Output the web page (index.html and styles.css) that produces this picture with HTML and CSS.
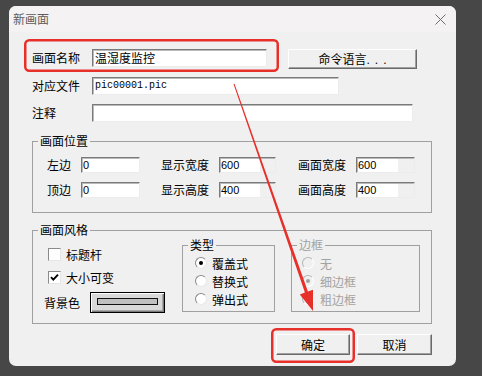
FILE: index.html
```html
<!DOCTYPE html>
<html lang="zh-CN">
<head>
<meta charset="utf-8">
<title>新画面</title>
<link rel="stylesheet" href="styles.css">
</head>
<body>
<div class="dialog">
  <div class="titlebar">
    <span class="title">新画面</span>
    <svg class="close" width="11" height="11" viewBox="0 0 11 11"><path d="M0.5 0.5L10.5 10.5M10.5 0.5L0.5 10.5" stroke="#6e6e6e" stroke-width="1" fill="none"/></svg>
  </div>
  <div class="content">
    <div class="row row-name">
      <span class="label">画面名称</span>
      <div class="input w-name">温湿度监控</div>
      <button class="btn btn-cmd">命令语言<span class="dots">...</span></button>
    </div>
    <div class="row row-file">
      <span class="label">对应文件</span>
      <div class="input w-file mono">pic00001.pic</div>
    </div>
    <div class="row row-note">
      <span class="label">注释</span>
      <div class="input w-note"></div>
    </div>

    <fieldset class="group g-pos">
      <legend>画面位置</legend>
      <div class="pos-grid">
        <span class="plabel">左边</span><div class="input num">0</div>
        <span></span>
        <span class="plabel">显示宽度</span><div class="input num partial">600</div>
        <span></span>
        <span class="plabel">画面宽度</span><div class="input num partial">600</div>
        <span class="plabel">顶边</span><div class="input num">0</div>
        <span></span>
        <span class="plabel">显示高度</span><div class="input num partial">400</div>
        <span></span>
        <span class="plabel">画面高度</span><div class="input num partial">400</div>
      </div>
    </fieldset>

    <fieldset class="group g-style">
      <legend>画面风格</legend>
      <div class="style-body">
        <div class="style-left">
          <div class="check-row"><span class="checkbox"></span><span>标题杆</span></div>
          <div class="check-row gap2"><span class="checkbox"><svg width="11" height="11" viewBox="0 0 11 11"><path d="M2 5.2L4.3 7.6L9 2.6" stroke="#000" stroke-width="1.9" fill="none"/></svg></span><span>大小可变</span></div>
          <div class="bg-row"><span class="bg-label">背景色</span><span class="swatch"><span class="swatch-inner"></span></span></div>
        </div>
        <fieldset class="group sub g-type">
          <legend>类型</legend>
          <div class="radios">
            <div class="radio-row"><span class="radio on"></span><span>覆盖式</span></div>
            <div class="radio-row"><span class="radio"></span><span>替换式</span></div>
            <div class="radio-row"><span class="radio"></span><span>弹出式</span></div>
          </div>
        </fieldset>
        <fieldset class="group sub g-border disabled">
          <legend>边框</legend>
          <div class="radios">
            <div class="radio-row"><span class="radio"></span><span>无</span></div>
            <div class="radio-row"><span class="radio on"></span><span>细边框</span></div>
            <div class="radio-row"><span class="radio"></span><span>粗边框</span></div>
          </div>
        </fieldset>
      </div>
    </fieldset>

    <div class="actions">
      <button class="btn btn-ok">确定</button>
      <button class="btn btn-cancel">取消</button>
    </div>
  </div>
</div>

<svg class="annot" width="482" height="376" viewBox="0 0 482 376">
  <rect x="25.25" y="40.25" width="252.5" height="30.5" rx="4" fill="none" stroke="#e8302b" stroke-width="2.5"/>
  <rect x="272.25" y="329.25" width="81.5" height="32.5" rx="4" fill="none" stroke="#e8302b" stroke-width="2.5"/>
  <polygon points="233.5,84 234.5,83.7 307.9,291.6 313,289.8 313,311 299.8,294.4 304.9,292.6" fill="#e8302b"/>
</svg>
</body>
</html>
```
FILE: styles.css
```css
* { box-sizing: border-box; }
html, body { margin: 0; padding: 0; }
body {
  position: relative;
  width: 482px;
  height: 376px;
  overflow: hidden;
  background: #474747;
  font-family: "Noto Sans CJK SC", "Microsoft YaHei", sans-serif;
  font-size: 12px;
  color: #000;
}
.dialog {
  margin: 6px 0 0 9px;
  width: 447px;
  height: 360px;
  background: #f0f0f0;
  border-radius: 7px;
  overflow: hidden;
}
.titlebar {
  height: 26px;
  background: #f4f2f2;
  display: flex;
  align-items: center;
  justify-content: space-between;
  padding: 0 10px 0 4px;
}
.title { color: #5c5c5c; line-height: 14px; }
.close { display: block; }

.content { padding: 17px 24px 0 23px; }
.row { display: flex; align-items: flex-start; height: 18px; }
.row-name { height: 20px; }
.row-file { margin-top: 8px; }
.row-note { margin-top: 9px; }
.label { width: 60px; line-height: 18px; flex: none; }

.input {
  height: 18px;
  background: #fff;
  border: 1px solid;
  border-color: #7a7a7a #ececec #ececec #7a7a7a;
  box-shadow: inset 1px 1px 0 #b9b9b9;
  padding-left: 2px;
  line-height: 16px;
  white-space: nowrap;
  overflow: hidden;
  flex: none;
}
.w-name { width: 175px; }
.w-file { width: 247px; }
.w-note { width: 321px; }
.mono { font-family: "Liberation Mono", monospace; font-size: 10px; }

.btn {
  font-family: inherit;
  font-size: 12px;
  color: #000;
  background: #f0f0f0;
  border: 1px solid;
  border-color: #fff #6a6a6a #6a6a6a #fff;
  box-shadow: inset -1px -1px 0 #a0a0a0;
  padding: 0;
  line-height: 16px;
  flex: none;
}
.btn-cmd { width: 129px; height: 20px; margin-left: 21px; }
.dots { font-family: "Liberation Sans", sans-serif; letter-spacing: 5px; margin-right: -5px; }

.group {
  margin: 0;
  padding: 0;
  border: 1px solid #a0a0a0;
  min-width: 0;
}
.group > legend {
  margin-left: 5px;
  padding: 0 2px;
  line-height: 14px;
  font-size: 12px;
}
.g-pos { margin-top: 12px; }
.pos-grid {
  display: grid;
  grid-template-columns: 34px 59px 21px 58px 57px 22px 58px 59px;
  grid-auto-rows: 16px;
  row-gap: 9px;
  padding: 9px 0 14px 14px;
}
.plabel { line-height: 16px; }
.input.num {
  height: 16px;
  font-family: "Liberation Sans", Arial, sans-serif;
  font-size: 11px;
  line-height: 14px;
  padding-left: 1px;
}
.input.partial { background: linear-gradient(90deg, #fff 0 72%, #f0f0f0 72%); }

.g-style { margin-top: 10px; }
.style-body { display: flex; align-items: flex-start; padding: 0 0 11px 11px; }
.style-left { width: 138px; padding-top: 8px; flex: none; }
.check-row { display: flex; align-items: center; height: 18px; padding-left: 4px; gap: 5px; }
.check-row.gap2 { margin-top: 5px; }
.checkbox {
  width: 13px; height: 13px;
  background: #fff;
  border: 1px solid;
  border-color: #8a8a8a #e6e6e6 #e6e6e6 #8a8a8a;
  display: flex; align-items: center; justify-content: center;
  flex: none;
}
.checkbox svg { display: block; }
.bg-row { display: flex; align-items: center; height: 20px; margin-top: 6px; gap: 10px; }
.swatch {
  width: 75px; height: 21px;
  border: 1px solid #000;
  background: #d9d9d9;
  box-shadow: inset 1px 1px 0 #fff, inset -1px -1px 0 #7a7a7a, inset -2px -2px 0 #a8a8a8;
  display: flex; align-items: center; justify-content: center;
  padding-bottom: 1px;
}
.swatch-inner { width: 61px; height: 7px; border: 1px solid #111; background: #c0c0c0; }

.sub { margin-top: 1px; flex: none; }
.g-type { width: 93px; }
.g-border { width: 129px; margin-left: 16px; }
.radios { padding: 2px 0 3px 12px; }
.g-border .radios { padding-left: 10px; }
.radio-row { display: flex; align-items: center; height: 18px; gap: 5px; }
.g-border .radio-row { gap: 6px; }
.radio {
  width: 12px; height: 12px;
  border-radius: 50%;
  background: #fff;
  border: 1px solid;
  border-color: #8a8a8a #e8e8e8 #e8e8e8 #8a8a8a;
  position: relative;
  flex: none;
}
.radio.on::after {
  content: "";
  position: absolute;
  left: 3px; top: 3px;
  width: 4px; height: 4px;
  border-radius: 50%;
  background: #000;
}
.disabled, .disabled legend { color: #a3a3a3; }
.disabled .radio { background: #f0f0f0; border-color: #b5b5b5 #fff #fff #b5b5b5; }
.disabled .radio.on::after { background: #a0a0a0; }

.actions { display: flex; justify-content: flex-end; gap: 7px; margin-top: 10px; }
.btn-ok { width: 74px; height: 21px; }
.btn-cancel { width: 75px; height: 21px; }

.annot { position: absolute; left: 0; top: 0; pointer-events: none; }
```
